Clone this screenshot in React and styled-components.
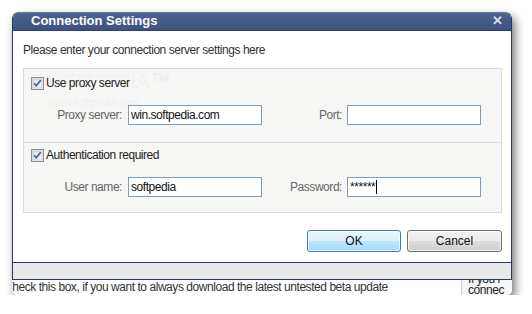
import styled, { createGlobalStyle } from "styled-components"

const Global = createGlobalStyle`
    body {
        margin: 0;
        background: #fff;
        font-family: "Liberation Sans", Arial, sans-serif;
        font-size: 12px;
        letter-spacing: -0.45px;
        color: #333;
    }
`

const Frame = styled.div`
    margin: 12px 0 0 12px;
    width: 500px;
    border-radius: 6px 6px 5px 5px;
    box-shadow: 3px 5px 10px rgba(0, 0, 0, 0.55);
    overflow: hidden;
    background: #fff;
`

const Dialog = styled.div`
    border: 1px solid #2b3b5e;
    border-top: none;
    border-radius: 6px 6px 0 0;
    overflow: hidden;
`

const TitleBar = styled.div`
    height: 18px;
    display: flex;
    align-items: center;
    justify-content: space-between;
    padding: 0 8px 0 18px;
    background: linear-gradient(#6479a0 0, #4c628b 2px, #3d5282 100%);
    color: #fff;
    font-weight: bold;
    font-size: 13px;
    letter-spacing: 0;
    line-height: 18px;
    border-bottom: 1px solid #2f4168;

    span.close {
        color: #d7deeb;
        font-size: 13px;
    }
`

const Body = styled.div`
    padding: 12px 9px 10px 10px;
`

const Intro = styled.p`
    margin: 0 0 11px 0;
    line-height: 14px;
`

const Panel = styled.div`
    border: 1px solid #dadada;
    background: #f6f6f4;
    position: relative;
`

const Section = styled.div`
    padding: ${props => props.top}px 7px ${props => props.bottom}px 7px;
    border-top: ${props => props.divided ? '1px solid #dcdcdc' : 'none'};
    position: relative;
`

const CheckRow = styled.label`
    display: flex;
    align-items: center;
    gap: 2px;
    height: 14px;
    margin-bottom: 15px;
    color: #222;
`

const Fields = styled.div`
    display: grid;
    grid-template-columns: 104px 134px 85px 134px;
    align-items: center;
    margin-left: -7px;
`

const FieldLabel = styled.span`
    text-align: right;
    padding-right: ${props => props.pad}px;
    color: #666;
`

const Input = styled.div`
    height: 18px;
    border: 1px solid #7f9db9;
    background: #fff;
    color: #111;
    padding-left: 2px;
    line-height: 18px;
    display: flex;
    align-items: center;

    i {
        display: inline-block;
        width: 1px;
        height: 14px;
        background: #000;
        margin-left: 1px;
    }
`

const Buttons = styled.div`
    display: flex;
    justify-content: flex-end;
    gap: 6px;
    margin-top: 17px;
`

const Button = styled.button`
    width: ${props => props.w}px;
    height: 22px;
    border-radius: 3px;
    font-family: "Liberation Sans", Arial, sans-serif;
    font-size: 12px;
    color: #111;
    border: 1px solid ${props => props.primary ? '#3c7fb1' : '#707070'};
    background: ${props => props.primary
        ? 'linear-gradient(#eaf6fd 0, #d9f0fc 50%, #bee6fd 51%, #a7d9f5 100%)'
        : 'linear-gradient(#f2f2f2 0, #ebebeb 50%, #dddddd 51%, #cfcfcf 100%)'};
    box-shadow: inset 0 0 0 1px rgba(255, 255, 255, 0.7);
    padding: 0;
`

const Watermark = styled.div`
    position: absolute;
    left: ${props => props.left}px;
    top: ${props => props.top}px;
    font-size: ${props => props.size}px;
    letter-spacing: ${props => props.spacing}px;
    color: ${props => props.outline ? 'transparent' : 'rgba(0, 0, 0, 0.06)'};
    -webkit-text-stroke: ${props => props.outline ? '1px rgba(0, 0, 0, 0.045)' : '0'};
    pointer-events: none;
    white-space: nowrap;
`

const Strip = styled.div`
    height: 16px;
    background: #e9e9e9;
    border-left: 1px solid #2b3b5e;
    border-right: 1px solid #2b3b5e;
    border-bottom: 1px solid #2b3b5e;
`

const Underlay = styled.div`
    display: flex;
    height: 15px;
    overflow: hidden;
`

const Hint = styled.div`
    flex: 1;
    white-space: nowrap;
    overflow: hidden;
    line-height: 14px;
    margin-left: -8px;
    color: #333;
`

const Side = styled.div`
    width: 44px;
    border-left: 1px solid #cfcfcf;
    background: #f7f7f7;
    padding-left: 6px;
    line-height: 11px;
    margin-top: -6px;
    white-space: nowrap;
    overflow: hidden;
    color: #222;
`

function Check() {
    return (
        <svg width="13" height="13" viewBox="0 0 13 13">
            <defs>
                <linearGradient id="cb" x1="0" y1="0" x2="1" y2="1">
                    <stop offset="0" stopColor="#dcdfe6" />
                    <stop offset="1" stopColor="#ffffff" />
                </linearGradient>
            </defs>
            <rect x="0.5" y="0.5" width="12" height="12" fill="url(#cb)" stroke="#8e8f8f" />
            <rect x="2" y="2" width="9" height="9" fill="none" stroke="#c8ccd6" />
            <path d="M3.2 6.4 L5.3 8.8 L9.8 3.2" fill="none" stroke="#4a5f8f" strokeWidth="1.7" />
        </svg>
    )
}

export default function App() {
    return (
        <>
            <Global />
            <Frame>
                <Dialog>
                    <TitleBar>
                        <span>Connection Settings</span>
                        <span className="close">✕</span>
                    </TitleBar>
                    <Body>
                        <Intro>Please enter your connection server settings here</Intro>
                        <Panel>
                            <Watermark outline left={7} top={0} size={21} spacing={0}>SOFTPEDIA™</Watermark>
                            <Watermark left={25} top={27} size={11} spacing={-0.3}>www.softpedia.com</Watermark>
                            <Section top={7} bottom={17}>
                                <CheckRow><Check />Use proxy server</CheckRow>
                                <Fields>
                                    <FieldLabel pad={6}>Proxy server:</FieldLabel>
                                    <Input>win.softpedia.com</Input>
                                    <FieldLabel pad={5}>Port:</FieldLabel>
                                    <Input />
                                </Fields>
                            </Section>
                            <Section top={5} bottom={15} divided>
                                <CheckRow><Check />Authentication required</CheckRow>
                                <Fields>
                                    <FieldLabel pad={6}>User name:</FieldLabel>
                                    <Input>softpedia</Input>
                                    <FieldLabel pad={5}>Password:</FieldLabel>
                                    <Input>******<i /></Input>
                                </Fields>
                            </Section>
                        </Panel>
                        <Buttons>
                            <Button primary w={94}>OK</Button>
                            <Button w={95}>Cancel</Button>
                        </Buttons>
                    </Body>
                </Dialog>
                <Strip />
                <Underlay>
                    <Hint>Check this box, if you want to always download the latest untested beta update</Hint>
                    <Side>If you r<br />connec</Side>
                </Underlay>
            </Frame>
        </>
    )
}
